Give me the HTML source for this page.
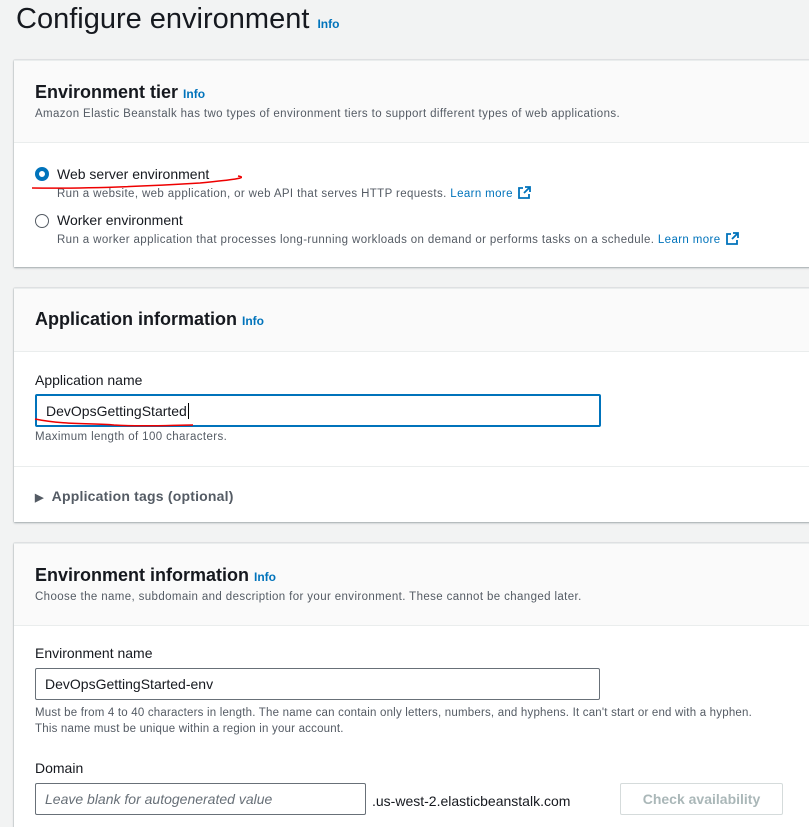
<!DOCTYPE html>
<html><head><style>
*{margin:0;padding:0;box-sizing:border-box}
html,body{width:809px;height:827px;overflow:hidden}
body{background:#f2f3f3;font-family:"Liberation Sans",Arial,sans-serif;color:#16191f;position:relative}
.a{position:absolute;white-space:nowrap}
.card{position:absolute;left:14px;width:820px;background:#fff;box-shadow:0 1px 2px rgba(0,28,36,.3),0 0 1px rgba(0,28,36,.3);border-top:1px solid #eaeded}
.hd{position:absolute;left:0;right:0;top:0;background:#fafafa;border-bottom:1px solid #eaeded}
.info{color:#0073bb;font-weight:bold;font-size:12px}
h2{font-size:18px;font-weight:bold}
.sm{font-size:11.5px;color:#545b64;letter-spacing:0.38px}
.lbl{font-size:14px;color:#16191f}
.inp{position:absolute;border:1px solid #aab7b8;border-radius:2px;background:#fff;font-size:14px;padding-left:9px;display:flex;align-items:center}
.rad{position:absolute;width:14px;height:14px;border-radius:50%}
.ext{display:inline-block;width:13px;height:13px;vertical-align:-2px;margin-left:5px}
</style></head><body>
<div class="a" style="left:16px;top:3px;font-size:29px;color:#16191f">Configure environment <span class="info" style="font-size:12px">Info</span></div>

<div class="card" style="top:60px;height:207px">
 <div class="hd" style="height:82px"></div>
 <div class="a" style="left:21px;top:21px"><h2>Environment tier <span class="info">Info</span></h2></div>
 <div class="a sm" style="left:21px;top:47px">Amazon Elastic Beanstalk has two types of environment tiers to support different types of web applications.</div>
 <div class="rad" style="left:21px;top:106px;border:4px solid #0073bb"></div>
 <div class="a lbl" style="left:43px;top:105px">Web server environment</div>
 <div class="a sm" style="left:43px;top:125px">Run a website, web application, or web API that serves HTTP requests. <span style="color:#0073bb">Learn more</span><svg class="ext" viewBox="0 0 13 13"><path d="M7 1h5v5M12 1L6 7M5 2H1v10h10V8" fill="none" stroke="#0073bb" stroke-width="1.8"/></svg></div>
 <div class="rad" style="left:21px;top:153px;border:1.5px solid #545b64"></div>
 <div class="a lbl" style="left:43px;top:151px">Worker environment</div>
 <div class="a sm" style="left:43px;top:171px">Run a worker application that processes long-running workloads on demand or performs tasks on a schedule. <span style="color:#0073bb">Learn more</span><svg class="ext" viewBox="0 0 13 13"><path d="M7 1h5v5M12 1L6 7M5 2H1v10h10V8" fill="none" stroke="#0073bb" stroke-width="1.8"/></svg></div>
</div>
<svg class="a" style="left:30px;top:174px" width="212" height="16"><path d="M2 14 C60 15 120 12 170 9 C200 6 220 4 208 2" stroke="#e00" stroke-width="1.5" fill="none"/></svg>

<div class="card" style="top:288px;height:234px">
 <div class="hd" style="height:63px"></div>
 <div class="a" style="left:21px;top:20px"><h2>Application information <span class="info">Info</span></h2></div>
 <div class="a lbl" style="left:21px;top:83px">Application name</div>
 <div class="inp" style="left:21px;top:105px;width:566px;height:33px;border:2px solid #0073bb">DevOpsGettingStarted<span style="border-left:1px solid #000;height:16px;margin-left:1px"></span></div>
 <div class="a sm" style="left:21px;top:142px">Maximum length of 100 characters.</div>
 <div style="position:absolute;left:0;right:0;top:177px;border-top:1px solid #eaeded"></div>
 <div class="a" style="left:21px;top:199px;font-size:14px;font-weight:bold;color:#545b64;letter-spacing:0.2px"><span style="font-size:11px;margin-right:8px">&#9654;</span>Application tags (optional)</div>
</div>
<svg class="a" style="left:34px;top:415px" width="160" height="14"><path d="M1 4 C30 10 60 8 80 10 C110 12 140 10 159 10" stroke="#e00" stroke-width="1.5" fill="none"/></svg>

<div class="card" style="top:543px;height:300px">
 <div class="hd" style="height:82px"></div>
 <div class="a" style="left:21px;top:21px"><h2>Environment information <span class="info">Info</span></h2></div>
 <div class="a sm" style="left:21px;top:47px">Choose the name, subdomain and description for your environment. These cannot be changed later.</div>
 <div class="a lbl" style="left:21px;top:101px">Environment name</div>
 <div class="inp" style="left:21px;top:124px;width:565px;height:32px;border-color:#687078">DevOpsGettingStarted-env</div>
 <div class="a sm" style="left:21px;top:161px;line-height:16px;letter-spacing:0.2px">Must be from 4 to 40 characters in length. The name can contain only letters, numbers, and hyphens. It can't start or end with a hyphen.<br>This name must be unique within a region in your account.</div>
 <div class="a lbl" style="left:21px;top:216px">Domain</div>
 <div class="inp" style="left:21px;top:239px;width:331px;height:32px;border-color:#687078;color:#687078;font-style:italic">Leave blank for autogenerated value</div>
 <div class="a lbl" style="left:358px;top:249px">.us-west-2.elasticbeanstalk.com</div>
 <div class="a" style="left:606px;top:239px;width:163px;height:32px;border:1px solid #d5dbdb;border-radius:2px;color:#aab7b8;font-weight:bold;font-size:14px;text-align:center;line-height:30px">Check availability</div>
</div>
</body></html>
